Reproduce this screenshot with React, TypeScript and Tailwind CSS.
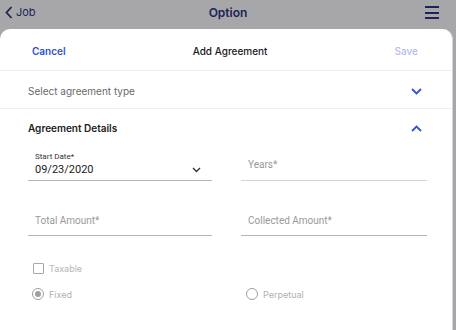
import React from "react";

const Chevron = ({ up = false, className = "" }: { up?: boolean; className?: string }) => (
  <svg width="11" height="7" viewBox="0 0 11 7" className={className}>
    <path
      d={up ? "M1 6 L5.5 1.5 L10 6" : "M1 1 L5.5 5.5 L10 1"}
      fill="none"
      stroke="currentColor"
      strokeWidth="1.8"
    />
  </svg>
);

export default function App() {
  return (
    <div
      className="w-[456px] h-[330px] bg-[#a7a7a9] overflow-hidden flex flex-col"
      style={{ fontFamily: "Inter, 'Noto Sans', sans-serif" }}
    >
      {/* top nav */}
      <div className="h-[29px] flex items-center justify-between pl-[5px] pr-[17px] pb-[4px] relative shrink-0">
        <div className="flex items-center gap-[3px] text-[#1c2456]">
          <svg width="8" height="13" viewBox="0 0 8 13">
            <path d="M6.5 1 L1.5 6.5 L6.5 12" fill="none" stroke="currentColor" strokeWidth="1.8" />
          </svg>
          <span className="text-[11px] leading-none">Job</span>
        </div>
        <div className="absolute left-0 right-0 top-0 h-[25px] flex items-center justify-center pointer-events-none">
          <span className="text-[12px] font-semibold text-[#1c2456] leading-none">Option</span>
        </div>
        <div className="flex flex-col gap-[3.5px] w-[14px]">
          <div className="h-[2px] bg-[#1c2456]" />
          <div className="h-[2px] bg-[#1c2456]" />
          <div className="h-[2px] bg-[#1c2456]" />
        </div>
      </div>

      {/* sheet */}
      <div className="flex-1 bg-white rounded-t-[10px] mr-[3px] flex flex-col border-r border-[#d6d6d8]">
        <div className="h-[42px] shrink-0 flex items-center justify-between pl-[32px] pr-[34px] pt-[3px] border-b border-[#eeeef6]">
          <span className="text-[10px] font-semibold text-[#3050d8]">Cancel</span>
          <span className="text-[10px] font-medium text-[#1a1a1a]">Add Agreement</span>
          <span className="text-[10px] font-medium text-[#b3bcee]">Save</span>
        </div>
        <div className="h-[38px] shrink-0 flex items-center justify-between pl-[28px] pr-[30px] pt-[3px] border-b border-[#eeeef6]">
          <span className="text-[10px] text-[#6a6a6a]">Select agreement type</span>
          <Chevron className="text-[#3050e0]" />
        </div>
        <div className="h-[37px] shrink-0 flex items-center justify-between pl-[28px] pr-[30px] pt-[2px]">
          <span className="text-[10px] font-semibold text-[#222]">Agreement Details</span>
          <Chevron up className="text-[#3050e0]" />
        </div>

        <div
          className="grid grid-cols-[184px_186px] gap-x-[29px] pl-[28px]"
          style={{ fontFamily: "Roboto, 'Liberation Sans', sans-serif" }}
        >
          <div className="h-[35px] border-b border-[#b5b5b5] flex flex-col justify-end pl-[7px] pr-[11px] pb-[2px]">
            <span className="text-[8px] leading-[10px] text-[#333]">Start Date*</span>
            <div className="flex items-center justify-between">
              <span className="text-[11px] leading-[16px] text-[#222]">09/23/2020</span>
              <svg width="9" height="6" viewBox="0 0 9 6" className="text-[#333]">
                <path d="M1 1 L4.5 4.5 L8 1" fill="none" stroke="currentColor" strokeWidth="1.4" />
              </svg>
            </div>
          </div>
          <div className="h-[35px] border-b border-[#d3d3d3] flex items-end pl-[7px] pb-[9px]">
            <span className="text-[10px] leading-[12px] text-[#999]">Years*</span>
          </div>
          <div className="h-[55px] border-b border-[#b5b5b5] flex items-end pl-[7px] pb-[8px]">
            <span className="text-[10px] leading-[12px] text-[#999]">Total Amount*</span>
          </div>
          <div className="h-[55px] border-b border-[#b5b5b5] flex items-end pl-[7px] pb-[8px]">
            <span className="text-[10px] leading-[12px] text-[#999]">Collected Amount*</span>
          </div>
        </div>

        <div className="flex items-center gap-[5px] pl-[33px] mt-[26px]">
          <div className="w-[11px] h-[11px] border-[1.5px] border-[#a8a8a8] rounded-[1px]" />
          <span className="text-[9px] text-[#b5b5b5]">Taxable</span>
        </div>
        <div className="grid grid-cols-[214px_1fr] pl-[32px] mt-[12px]">
          <div className="flex items-center gap-[5px]">
            <div className="w-[12px] h-[12px] rounded-full border-[1.5px] border-[#a0a0a0] flex items-center justify-center">
              <div className="w-[6px] h-[6px] rounded-full bg-[#a0a0a0]" />
            </div>
            <span className="text-[9px] text-[#b0b0b0]">Fixed</span>
          </div>
          <div className="flex items-center gap-[5px]">
            <div className="w-[12px] h-[12px] rounded-full border-[1.5px] border-[#a0a0a0]" />
            <span className="text-[9px] text-[#b0b0b0]">Perpetual</span>
          </div>
        </div>
      </div>
    </div>
  );
}
